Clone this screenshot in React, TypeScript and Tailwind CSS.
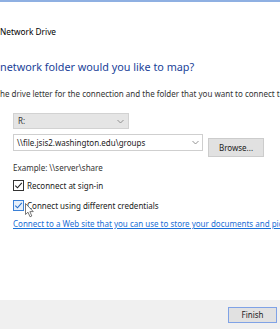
import React from "react";

function Check({ hover }: { hover?: boolean }) {
  return (
    <div
      className={
        hover
          ? "w-[11px] h-[11px] border border-[#3b80d6] bg-[#e6f0fb] flex items-center justify-center shrink-0"
          : "w-[11px] h-[11px] border border-[#333333] bg-white flex items-center justify-center shrink-0"
      }
    >
      <svg width="9" height="9" viewBox="0 0 9 9">
        <path d="M1.3 4.6 L3.5 6.8 L7.8 1.8" fill="none" stroke={hover ? "#2a6fc9" : "#222"} strokeWidth="1.1" />
      </svg>
    </div>
  );
}

export default function App() {
  return (
    <div className="w-[280px] h-[329px] overflow-hidden relative bg-white flex flex-col font-['Segoe_UI','Noto_Sans',sans-serif] text-[#1a1a1a]">
      <div className="h-[2px] bg-[#8fb0e2] shrink-0" />
      <div className="flex-1 flex flex-col whitespace-nowrap">
        <div className="mt-[24px] text-[8.3px] leading-[11px] text-black">Network Drive</div>
        <div className="mt-[23px] text-[10.8px] leading-[14px] text-[#213f99]">network folder would you like to map?</div>
        <div className="mt-[14px] text-[8px] leading-[11px] text-[#333333]">
          he drive letter for the connection and the folder that you want to connect to:
        </div>
        <div className="mt-[14px] ml-[13px] w-[116px] h-[16px] bg-[#e5e5e5] border border-[#d2d2d2] flex items-center justify-between px-[4px] text-[8px] text-[#333]">
          <span>R:</span>
          <svg width="7" height="5" viewBox="0 0 7 5">
            <path d="M0.5 1 L3.5 4 L6.5 1" fill="none" stroke="#888" strokeWidth="0.9" />
          </svg>
        </div>
        <div className="mt-[5px] ml-[13px] flex items-start gap-[5px]">
          <div className="w-[190px] h-[17px] bg-white border border-[#cfcfcf] flex items-center justify-between px-[3px] text-[8px] text-[#222]">
            <span>\\file.jsis2.washington.edu\groups</span>
            <svg width="7" height="5" viewBox="0 0 7 5">
              <path d="M0.5 1 L3.5 4 L6.5 1" fill="none" stroke="#888" strokeWidth="0.9" />
            </svg>
          </div>
          <div className="mt-[4px] w-[56px] h-[19px] bg-[#e1e1e1] border border-[#cccccc] flex items-center justify-center text-[8px] text-[#222]">
            Browse...
          </div>
        </div>
        <div className="mt-[5px] ml-[13px] text-[8px] leading-[11px] text-[#333]">Example: \\server\share</div>
        <div className="mt-[7px] ml-[13px] flex items-center gap-[3px] text-[8px] leading-[11px] text-[#222]">
          <Check />
          <span>Reconnect at sign-in</span>
        </div>
        <div className="mt-[9px] ml-[13px] flex items-center gap-[3px] text-[8px] leading-[11px] text-[#222]">
          <Check hover />
          <span>Connect using different credentials</span>
        </div>
        <div className="mt-[7px] ml-[13px] text-[8px] leading-[11px] text-[#1a6fd6] underline">
          Connect to a Web site that you can use to store your documents and pictures
        </div>
      </div>
      <div className="h-[29px] bg-[#f0f0f0] shrink-0 flex items-start justify-end pt-[7px] pr-[3px]">
        <div className="w-[49px] h-[16px] bg-[#e1e1e1] border border-[#7fa2e6] flex items-center justify-center text-[8px] text-[#222]">
          Finish
        </div>
      </div>
      <svg className="absolute left-[25px] top-[203px]" width="10" height="15" viewBox="0 0 10 15">
        <path d="M0.5 0.5 L0.5 11.5 L3 9.2 L5 13.8 L6.8 13 L4.9 8.6 L8.3 8.6 Z" fill="white" stroke="#555" strokeWidth="0.8" strokeLinejoin="round" />
      </svg>
    </div>
  );
}
